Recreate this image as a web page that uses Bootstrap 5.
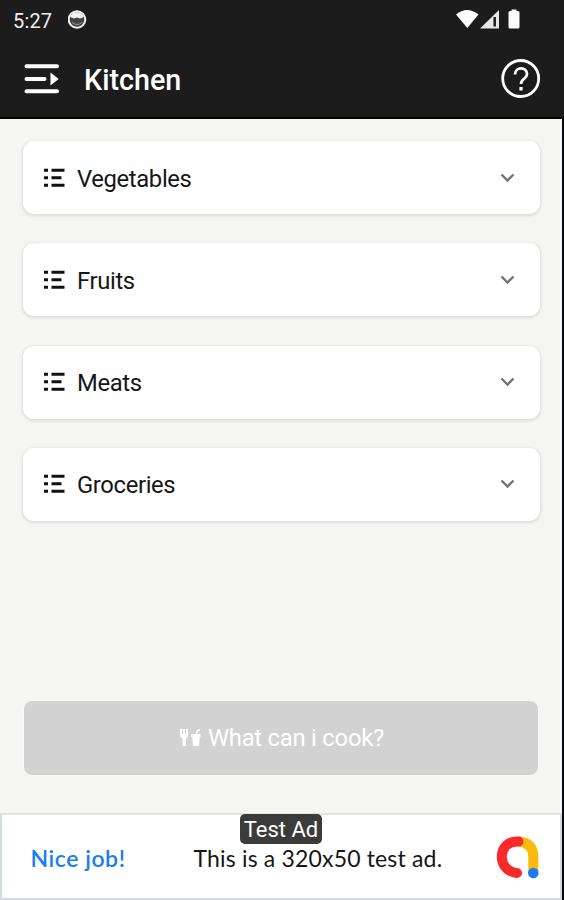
<!DOCTYPE html>
<html lang="en">
<head>
<meta charset="utf-8">
<meta name="viewport" content="width=device-width, initial-scale=1">
<title>Kitchen</title>
<link href="https://cdn.jsdelivr.net/npm/bootstrap@5.3.0/dist/css/bootstrap.min.css" rel="stylesheet">
<style>
body{font-family:Roboto,sans-serif;background:#f5f5f3;color:#161616;height:900px;overflow:hidden}
svg{display:block;flex:none}
.screen{height:900px;border-right:2px solid #08090a;line-height:1}
.top-area{background:#1c1c1c;height:119px;margin-right:-2px;border-bottom:2px solid #050505;color:#fff}
.status-row{height:40px;padding:0 43px 0 13px;font-size:20px;color:#eee}
.status-time{padding-top:1px;letter-spacing:.15px}
.app-bar{height:77px;padding:0 23px 0 24px}
.app-title{font-size:28.7px;font-weight:500;margin-left:24px;padding-top:3px}
.group-list{padding:22px 22px 0 23px;gap:29.3px}
.group-card{height:73px;border:0;border-radius:11px;padding:0 24px 0 21px;font-size:23.8px;letter-spacing:-.35px;color:#161616;background:#fff;box-shadow:0 1px 3px 1px rgba(0,0,0,.1)}
.group-card span{margin-left:12px;padding-top:4px}
.cook-wrap{padding:0 24px 37px}
.cook-btn{height:76px;border:1px solid #fafafa;border-radius:9px;background:#d2d2d2;color:#fff;font-size:23.8px;letter-spacing:-.23px;gap:7px;margin:0 -1px;padding:0 0 0 2px}
.cook-btn span{padding-top:1px}
.ad-bar{height:87px;background:#fff;border:2px solid #d5dcdf;border-top-color:#e0e3e2;font-family:Lato,sans-serif;font-size:23px}
.ad-tag{top:-1px;left:238px;width:82px;height:30px;background:#3b3b3b;color:#fff;border-radius:5px;font:22px/31px Roboto,sans-serif}
.ad-cta{color:#1a7df0;font-weight:600;letter-spacing:.55px;margin-left:28.5px;width:163px;padding-top:4px}
.ad-copy{letter-spacing:.17px;padding-top:4px}
.ad-logo{margin-left:auto;margin-right:20px}
</style>
</head>
<body>
<div class="screen d-flex flex-column">
  <header class="top-area">
    <div class="status-row d-flex align-items-center">
      <span class="status-time">5:27</span>
      <svg class="ms-3" width="20" height="20" viewBox="0 0 20 20"><circle cx="9" cy="9.500" r="8.300" fill="#444" stroke="#f2f2f2" stroke-width="2"/><path d="M2 7a7.500 7.500 0 0 1 14 0l-4 1.500-3-1-3 1z" fill="#f2f2f2"/><path d="M4 12.500q5 4 10 0" fill="none" stroke="#999"/></svg>
      <div class="d-flex align-items-center ms-auto">
        <svg width="65" height="22" viewBox="0 0 65 22" fill="#fff"><path d="M0 5.500Q11-3.500 22.500 5.500L11.300 19z"/><path d="M24 19.500L43 1v18.500z" fill="#e8e8e8"/><path d="M38.700 8v9.500" stroke="#1c1c1c" stroke-width="2.500"/><path d="M55.500 2V.500h5V2H62q1.500 0 1.500 1.500V18q0 1.500-1.500 1.500h-8Q52.500 19.500 52.500 18V3.500Q52.500 2 54 2z"/></svg>
      </div>
    </div>
    <div class="app-bar d-flex align-items-center">
      <svg width="36" height="32" viewBox="0 0 36 32"><path d="M2.500 3.300h30.500M2.500 16h18M2.500 28.300h30.500" stroke="#fff" stroke-width="4" stroke-linecap="round"/><path d="M26.500 9.500l8.200 6.500-8.200 6.500z" fill="#fff"/></svg>
      <h1 class="app-title mb-0">Kitchen</h1>
      <svg class="ms-auto" width="40" height="40" viewBox="0 0 40 40" fill="none" stroke="#fff"><circle cx="19.700" cy="19.500" r="18" stroke-width="2.800"/><path d="M14 15.500C14 7.500 26 7.500 26 15c0 5-6 4.500-6 10" stroke-width="2.800"/><path d="M20 28v3.500" stroke-width="3.200"/></svg>
    </div>
  </header>
  <main class="group-list d-flex flex-column">
    <button class="group-card d-flex align-items-center"><svg width="21" height="20" viewBox="0 0 21 20"><path d="M0 2.200h4M0 9.700h4M0 17.200h4M7.500 2.200H20.500M7.500 9.700H17.500M7.500 17.200H20.500" stroke="#111" stroke-width="2.900"/></svg><span>Vegetables</span><svg class="ms-auto" width="17" height="12" viewBox="0 0 17 12"><path d="M2.500 2.500l6 6 6-6" fill="none" stroke="#747474" stroke-width="2.400"/></svg></button>
    <button class="group-card d-flex align-items-center"><svg width="21" height="20" viewBox="0 0 21 20"><path d="M0 2.200h4M0 9.700h4M0 17.200h4M7.500 2.200H20.500M7.500 9.700H17.500M7.500 17.200H20.500" stroke="#111" stroke-width="2.900"/></svg><span>Fruits</span><svg class="ms-auto" width="17" height="12" viewBox="0 0 17 12"><path d="M2.500 2.500l6 6 6-6" fill="none" stroke="#747474" stroke-width="2.400"/></svg></button>
    <button class="group-card d-flex align-items-center"><svg width="21" height="20" viewBox="0 0 21 20"><path d="M0 2.200h4M0 9.700h4M0 17.200h4M7.500 2.200H20.500M7.500 9.700H17.500M7.500 17.200H20.500" stroke="#111" stroke-width="2.900"/></svg><span>Meats</span><svg class="ms-auto" width="17" height="12" viewBox="0 0 17 12"><path d="M2.500 2.500l6 6 6-6" fill="none" stroke="#747474" stroke-width="2.400"/></svg></button>
    <button class="group-card d-flex align-items-center"><svg width="21" height="20" viewBox="0 0 21 20"><path d="M0 2.200h4M0 9.700h4M0 17.200h4M7.500 2.200H20.500M7.500 9.700H17.500M7.500 17.200H20.500" stroke="#111" stroke-width="2.900"/></svg><span>Groceries</span><svg class="ms-auto" width="17" height="12" viewBox="0 0 17 12"><path d="M2.500 2.500l6 6 6-6" fill="none" stroke="#747474" stroke-width="2.400"/></svg></button>
  </main>
  <div class="cook-wrap mt-auto d-grid">
    <button class="cook-btn d-flex align-items-center justify-content-center">
      <svg width="21" height="20" viewBox="0 0 21 20" fill="#fff"><path d="M0 1h2v5h1V1h2v5h1V1h2v6q0 3-2 3.500V18H2.500v-7.500Q0 10 0 7z"/><path d="M11 6h4.500l1.500-4 3-1v1.500l-1.700.8L17.500 6h3v3h-.8l-.7 9h-6l-.8-9H11z"/></svg>
      <span>What can i cook?</span>
    </button>
  </div>
  <footer class="ad-bar position-relative d-flex align-items-center">
    <span class="ad-tag position-absolute text-center">Test Ad</span>
    <span class="ad-cta">Nice job!</span>
    <span class="ad-copy">This is a 320x50 test ad.</span>
    <svg class="ad-logo" width="44" height="44" viewBox="0 0 44 44" fill="none" stroke-linecap="round" stroke-width="10"><path d="M23 6.500Q37.300 8 37.300 22v15" stroke="#fbb90c"/><path d="M22.500 6.500C1 5 0 36 21 38" stroke="#fa2a2b"/><circle cx="37.300" cy="38" r="5.300" fill="#1a7df0"/></svg>
  </footer>
</div>
<script src="https://cdn.jsdelivr.net/npm/bootstrap@5.3.0/dist/js/bootstrap.bundle.min.js"></script>
</body>
</html>
